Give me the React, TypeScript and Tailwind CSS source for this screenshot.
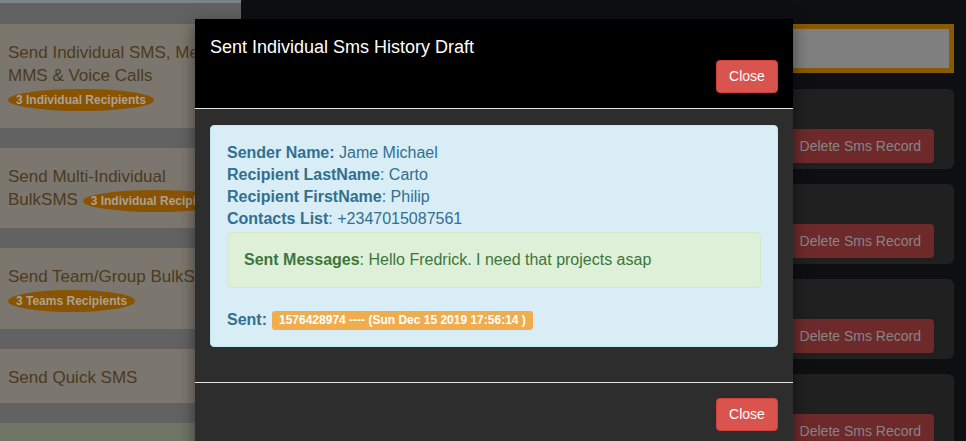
import { ReactNode } from 'react'

// Sidebar entries (colours already dimmed by the modal backdrop)
const menu: { label: ReactNode; badge?: string; inline?: boolean; h: string }[] = [
  { label: <>Send Individual SMS, Media,<br />MMS &amp; Voice Calls</>, badge: '3 Individual Recipients', h: 'h-[104px]' },
  { label: <>Send Multi-Individual<br />BulkSMS</>, badge: '3 Individual Recipients', inline: true, h: 'h-[80px]' },
  { label: <>Send Team/Group BulkSMS</>, badge: '3 Teams Recipients', h: 'h-[81px]' },
  { label: <>Send Quick SMS</>, h: 'h-[54px]' },
]

function Badge({ text }: { text: string }) {
  return (
    <span className="inline-block rounded-[50%] bg-[#8a5300] px-[8px] text-[12px] font-bold leading-[22px] text-[#aaa293] whitespace-nowrap">
      {text}
    </span>
  )
}

function Sidebar() {
  return (
    <aside className="w-[241px] shrink-0 overflow-hidden bg-[#626262]">
      <div className="h-[3px] bg-[#7a848b]" />
      <div className="h-[21px]" />
      {menu.map((m, i) => (
        <div key={i} className={`${m.h} mb-[20px] bg-[#7b776e] px-[8px] pt-[17px] text-[17px] leading-[23px] text-[#4b3a1f] whitespace-nowrap`}>
          {m.inline ? (
            <>
              Send Multi-Individual
              <br />
              BulkSMS <Badge text={m.badge!} />
            </>
          ) : (
            <>
              <div>{m.label}</div>
              {m.badge && <Badge text={m.badge} />}
            </>
          )}
        </div>
      ))}
      <div className="h-[40px] bg-[#6f7666]" />
    </aside>
  )
}

function RecordCard() {
  return (
    <div className="flex h-[80px] items-end justify-end rounded-[6px] bg-[#202020] pb-[6px] pr-[20px]">
      <button className="h-[34px] rounded-[4px] bg-[#6e2a2a] px-[13px] text-[14px] text-[#868686]">
        Delete Sms Record
      </button>
    </div>
  )
}

function Main() {
  return (
    <main className="flex-1 bg-[#0e0f13] pl-[14px] pr-[12px] pt-[24px]">
      <div className="h-[49px] border-[5px] border-[#8a5a00] bg-[#7f7f7f]" />
      <div className="mt-[16px] flex flex-col gap-[15px]">
        <RecordCard />
        <RecordCard />
        <RecordCard />
        <RecordCard />
      </div>
    </main>
  )
}

function CloseButton() {
  return (
    <button className="h-[33px] w-[62px] rounded-[4px] border border-[#d43f3a] bg-[#d9534f] text-[14px] text-white">
      Close
    </button>
  )
}

function HistoryModal() {
  return (
    <div className="absolute left-[195px] top-[19px] w-[598px] bg-[#2d2d2d] shadow-[0_5px_15px_rgba(0,0,0,0.5)]">
      {/* Header */}
      <div className="border-b border-[#e5e5e5] bg-black px-[15px] pb-[15px] pt-[15px]">
        <h4 className="text-[18px] leading-[26px] text-white">Sent Individual Sms History Draft</h4>
        <div className="flex justify-end">
          <CloseButton />
        </div>
      </div>

      {/* Body */}
      <div className="px-[15px] pb-[35px] pt-[16px]">
        <div className="rounded-[4px] border border-[#bce8f1] bg-[#d9edf7] px-[16px] pb-[15px] pt-[16px] text-[16px] leading-[22px] text-[#31708f]">
          <div><b>Sender Name:</b> Jame Michael</div>
          <div><b>Recipient LastName</b>: Carto</div>
          <div><b>Recipient FirstName</b>: Philip</div>
          <div><b>Contacts List</b>: +2347015087561</div>
          <div className="mt-[2px] rounded-[4px] border border-[#d6e9c6] bg-[#dff0d8] px-[16px] py-[16px] text-[#3c763d]">
            <b>Sent Messages</b>: Hello Fredrick. I need that projects asap
          </div>
          <div className="mt-[21px] flex items-center gap-[5px]">
            <b>Sent:</b>
            <span className="rounded-[3px] bg-[#f0ad4e] px-[7px] text-[12px] font-bold leading-[19px] text-white">
              1576428974 ---- (Sun Dec 15 2019 17:56:14 )
            </span>
          </div>
        </div>
      </div>

      {/* Footer */}
      <div className="flex justify-end border-t border-[#e5e5e5] px-[15px] pb-[20px] pt-[15px]">
        <CloseButton />
      </div>
    </div>
  )
}

export default function App() {
  return (
    <div className="relative flex h-[441px] w-[966px] overflow-hidden bg-[#0e0f13] font-['Liberation_Sans',sans-serif]">
      <Sidebar />
      <Main />
      <HistoryModal />
    </div>
  )
}
